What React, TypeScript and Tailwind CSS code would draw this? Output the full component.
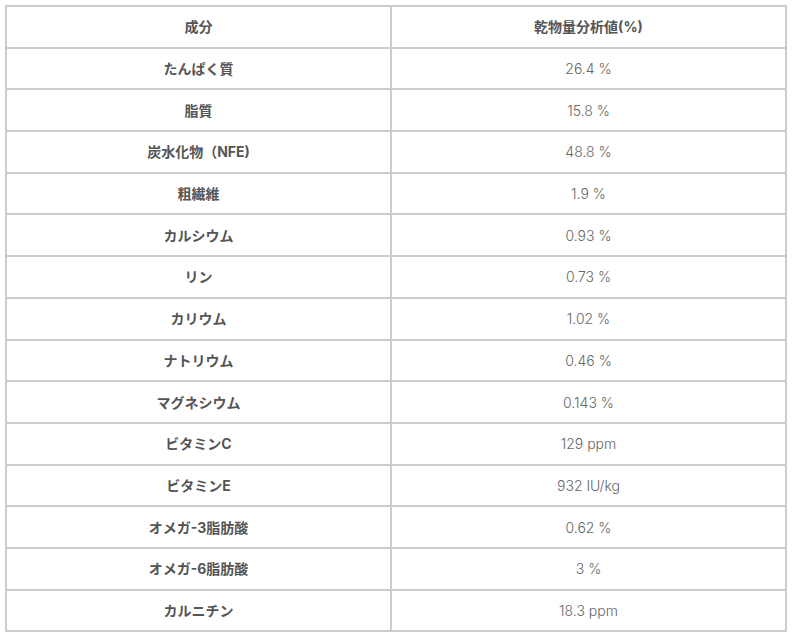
const rows: [string, string][] = [
  ['たんぱく質', '26.4 %'],
  ['脂質', '15.8 %'],
  ['炭水化物（NFE)', '48.8 %'],
  ['粗繊維', '1.9 %'],
  ['カルシウム', '0.93 %'],
  ['リン', '0.73 %'],
  ['カリウム', '1.02 %'],
  ['ナトリウム', '0.46 %'],
  ['マグネシウム', '0.143 %'],
  ['ビタミンC', '129 ppm'],
  ['ビタミンE', '932 IU/kg'],
  ['オメガ-3脂肪酸', '0.62 %'],
  ['オメガ-6脂肪酸', '3 %'],
  ['カルニチン', '18.3 ppm'],
];

export default function App() {
  return (
    <div className="w-[792px] h-[640px] bg-white pl-[5px] pt-[5px]">
      <table className="w-[782px] border-collapse table-fixed text-[14px] text-[#555]">
        <colgroup>
          <col className="w-[385px]" />
          <col />
        </colgroup>
        <thead>
          <tr className="h-[41.7px]">
            <th className="border-2 border-[#cccccc] font-bold font-['Inter','Noto_Sans_CJK_JP',sans-serif]">成分</th>
            <th className="border-2 border-[#cccccc] font-bold font-['Inter','Noto_Sans_CJK_JP',sans-serif]">乾物量分析値(%)</th>
          </tr>
        </thead>
        <tbody>
          {rows.map(([name, value]) => (
            <tr key={name} className="h-[41.7px]">
              <td className="border-2 border-[#cccccc] text-center font-bold font-['Inter','Noto_Sans_CJK_JP',sans-serif]">{name}</td>
              <td className="border-2 border-[#cccccc] text-center font-light text-[#666] font-['Inter','Noto_Sans_CJK_JP',sans-serif]">{value}</td>
            </tr>
          ))}
        </tbody>
      </table>
    </div>
  );
}
